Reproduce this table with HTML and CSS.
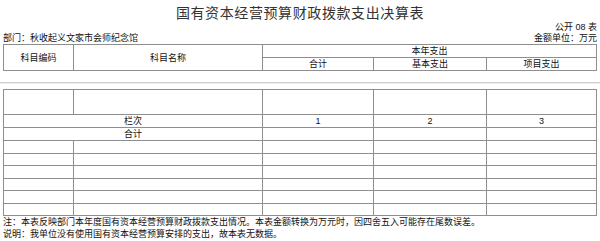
FILE: index.html
```html
<!DOCTYPE html>
<html lang="zh-CN">
<head>
<meta charset="utf-8">
<title>国有资本经营预算财政拨款支出决算表</title>
<link rel="stylesheet" href="styles.css">
</head>
<body>
<div class="page">
  <h1 class="title">国有资本经营预算财政拨款支出决算表</h1>
  <div class="meta-right">公开 08 表</div>
  <div class="meta-row">
    <span>部门：秋收起义文家市会师纪念馆</span>
    <span>金额单位：万元</span>
  </div>
  <table class="grid head">
    <colgroup>
      <col class="c1"><col class="c2"><col class="c3"><col class="c4"><col class="c5">
    </colgroup>
    <tr class="h1">
      <td rowspan="2">科目编码</td>
      <td rowspan="2">科目名称</td>
      <td colspan="3">本年支出</td>
    </tr>
    <tr class="h2">
      <td>合计</td>
      <td>基本支出</td>
      <td>项目支出</td>
    </tr>
  </table>
  <div class="divider"></div>
  <table class="grid body">
    <colgroup>
      <col class="c1"><col class="c2"><col class="c3"><col class="c4"><col class="c5">
    </colgroup>
    <tr class="tall"><td></td><td></td><td></td><td></td><td></td></tr>
    <tr class="r13"><td colspan="2">栏次</td><td>1</td><td>2</td><td>3</td></tr>
    <tr class="r13"><td colspan="2">合计</td><td></td><td></td><td></td></tr>
    <tr class="r13"><td></td><td></td><td></td><td></td><td></td></tr>
    <tr class="r12"><td></td><td></td><td></td><td></td><td></td></tr>
    <tr class="r13"><td></td><td></td><td></td><td></td><td></td></tr>
    <tr class="r12"><td></td><td></td><td></td><td></td><td></td></tr>
    <tr class="r13"><td></td><td></td><td></td><td></td><td></td></tr>
    <tr class="r12"><td></td><td></td><td></td><td></td><td></td></tr>
  </table>
  <p class="note">注：本表反映部门本年度国有资本经营预算财政拨款支出情况。本表金额转换为万元时，因四舍五入可能存在尾数误差。</p>
  <p class="note">说明：我单位没有使用国有资本经营预算安排的支出，故本表无数据。</p>
</div>
</body>
</html>
```
FILE: styles.css
```css
html, body {
  margin: 0;
  padding: 0;
  background: #fff;
}
body {
  font-family: "Liberation Sans", "Noto Sans CJK SC", sans-serif;
  font-size: 9px;
  line-height: 12px;
  color: #111;
}
.page {
  width: 600px;
}
.title {
  margin: 0;
  padding-top: 4px;
  font-size: 14px;
  line-height: 18px;
  font-weight: normal;
  letter-spacing: 0.6px;
  text-align: center;
  color: #333;
}
.meta-right {
  text-align: right;
  padding-right: 3px;
  line-height: 11px;
}
.meta-row {
  display: flex;
  justify-content: space-between;
  padding: 0 3px;
  line-height: 11px;
}
.grid {
  border-collapse: collapse;
  table-layout: fixed;
  width: 594px;
  margin-left: 3px;
}
.grid td {
  border: 1px solid #8e8e8e;
  padding: 0;
  text-align: center;
  vertical-align: middle;
  white-space: nowrap;
  overflow: hidden;
}
.c1 { width: 70px; }
.c2 { width: 189px; }
.c3 { width: 111px; }
.c4 { width: 113px; }
.c5 { width: 110px; }
.head .h1 td { height: 12px; }
.head .h2 td { height: 11px; }
.divider {
  margin-top: 11px;
  height: 0;
  border-top: 1px solid #cfcfcf;
  border-bottom: 1px solid #ececec;
  margin-bottom: 5px;
}
.body .tall td { height: 24px; }
.body .r13 td { height: 12px; }
.body .r12 td { height: 11px; }
.note {
  margin: 0;
  padding-left: 3px;
  line-height: 12px;
  white-space: nowrap;
}
```
